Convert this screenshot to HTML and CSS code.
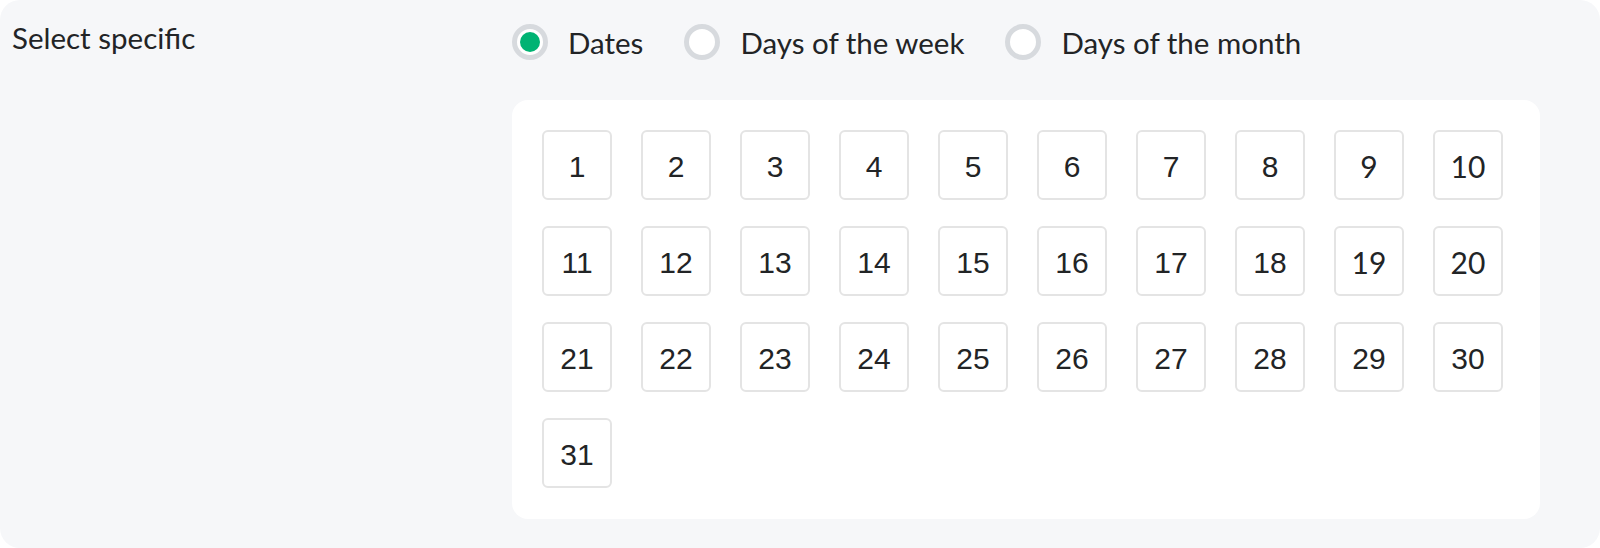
FILE: index.html
```html
<!DOCTYPE html>
<html>
<head>
<meta charset="utf-8">
<link rel="stylesheet" href="styles.css">
</head>
<body>
<div class="card">
  <div class="label">Select specific</div>
  <div class="content">
    <div class="radios">
      <label class="radio"><span class="dot checked"></span><span class="rtext">Dates</span></label>
      <label class="radio"><span class="dot"></span><span class="rtext">Days of the week</span></label>
      <label class="radio"><span class="dot"></span><span class="rtext">Days of the month</span></label>
    </div>
    <div class="panel">
      <div class="grid">
        <div class="day">1</div><div class="day">2</div><div class="day">3</div><div class="day">4</div><div class="day">5</div>
        <div class="day">6</div><div class="day">7</div><div class="day">8</div><div class="day lato">9</div><div class="day lato">10</div>
        <div class="day">11</div><div class="day">12</div><div class="day">13</div><div class="day">14</div><div class="day">15</div>
        <div class="day">16</div><div class="day">17</div><div class="day">18</div><div class="day lato">19</div><div class="day lato">20</div>
        <div class="day">21</div><div class="day">22</div><div class="day">23</div><div class="day">24</div><div class="day">25</div>
        <div class="day">26</div><div class="day">27</div><div class="day">28</div><div class="day">29</div><div class="day">30</div>
        <div class="day">31</div>
      </div>
    </div>
  </div>
</div>
</body>
</html>
```

FILE: styles.css
```css
html, body {
  margin: 0;
  padding: 0;
  background: #ffffff;
}
body {
  font-family: Lato, "Liberation Sans", sans-serif;
  color: #222426;
}
.card {
  box-sizing: border-box;
  width: 1600px;
  height: 548px;
  background: #f6f7f9;
  border-radius: 20px;
  display: flex;
  padding: 0 12px;
}
.label {
  width: 500px;
  flex: none;
  font-size: 29.5px;
  line-height: 36px;
  padding-top: 20px;
}
.content {
  display: flex;
  flex-direction: column;
  padding-top: 24px;
  gap: 40px;
}
.radios {
  display: flex;
  align-items: center;
  gap: 41px;
  height: 36px;
}
.radio {
  display: flex;
  align-items: center;
  gap: 20px;
  font-size: 29.5px;
}
.dot {
  box-sizing: border-box;
  width: 36px;
  height: 36px;
  border-radius: 50%;
  border: 5px solid #d7dade;
  background: #ffffff;
  display: flex;
  align-items: center;
  justify-content: center;
}
.dot.checked::after {
  content: "";
  width: 20px;
  height: 20px;
  border-radius: 50%;
  background: #00b373;
}
.panel {
  width: 1028px;
  box-sizing: border-box;
  background: #ffffff;
  border-radius: 16px;
  padding: 30px 30px 31px;
}
.grid {
  display: grid;
  grid-template-columns: repeat(10, 70px);
  column-gap: 29px;
  row-gap: 26px;
}
.day {
  box-sizing: border-box;
  width: 70px;
  height: 70px;
  border: 2px solid #e4e4e4;
  border-radius: 6px;
  padding-top: 3px;
  display: flex;
  align-items: center;
  justify-content: center;
  font-family: "Liberation Sans", Arial, sans-serif;
  font-size: 30px;
  color: #222426;
}
.day.lato {
  font-family: Lato, "Liberation Sans", sans-serif;
  padding-top: 1px;
}
```
